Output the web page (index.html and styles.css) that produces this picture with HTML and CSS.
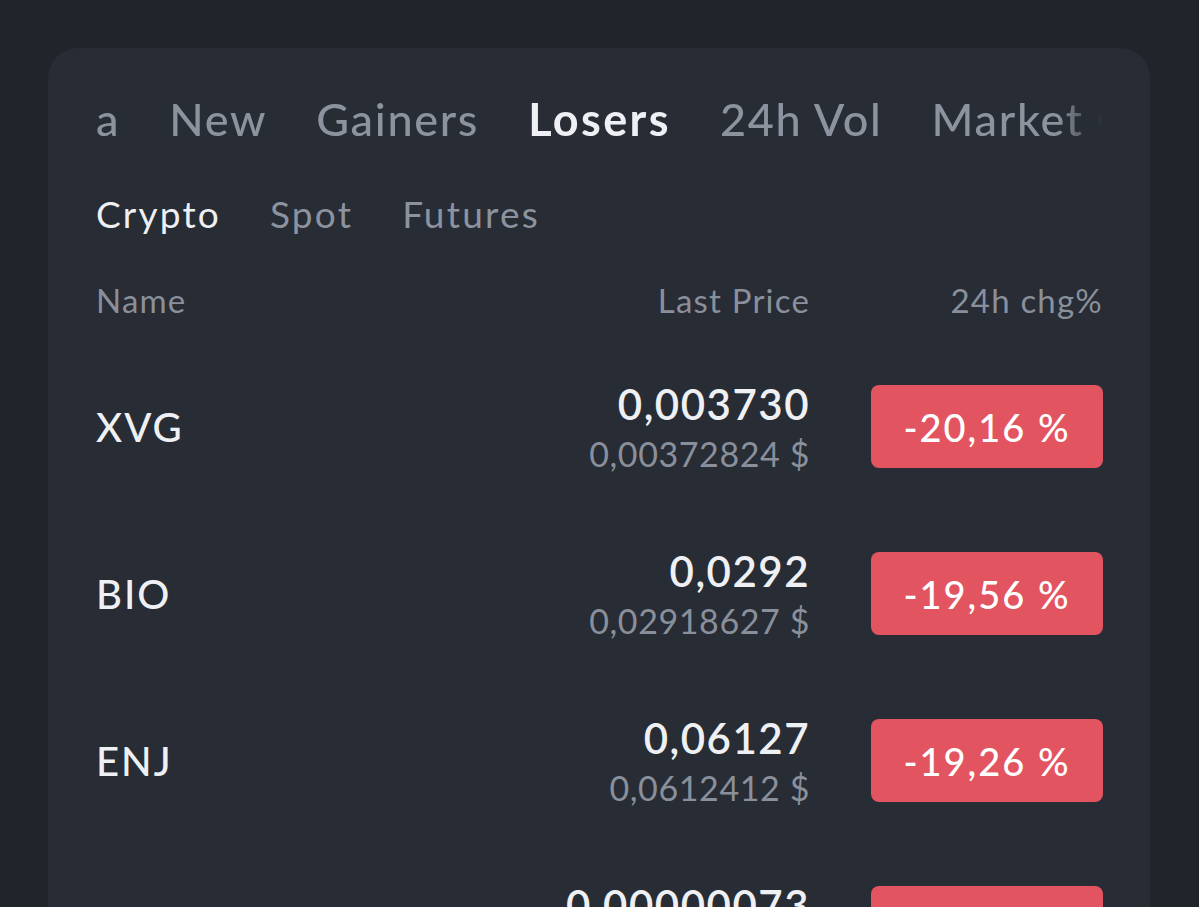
FILE: index.html
```html
<!DOCTYPE html>
<html lang="en">
<head>
  <meta charset="UTF-8">
  <title>Markets</title>
  <link rel="stylesheet" href="styles.css">
</head>
<body>

  <div class="card">
    <div class="tabs">
      <span class="tab">a</span>
      <span class="tab">New</span>
      <span class="tab">Gainers</span>
      <span class="tab active">Losers</span>
      <span class="tab">24h Vol</span>
      <span class="tab">Market Cap</span>
    </div>

    <div class="subtabs">
      <span class="subtab active">Crypto</span>
      <span class="subtab">Spot</span>
      <span class="subtab">Futures</span>
    </div>

    <div class="row head">
      <span>Name</span>
      <span class="right">Last Price</span>
      <span class="right">24h chg%</span>
    </div>

    <div class="row">
      <span class="coin">XVG</span>
      <div class="price">
        <div class="last">0,003730</div>
        <div class="usd">0,00372824 $</div>
      </div>
      <span class="chg">-20,16 %</span>
    </div>

    <div class="row">
      <span class="coin">BIO</span>
      <div class="price">
        <div class="last">0,0292</div>
        <div class="usd">0,02918627 $</div>
      </div>
      <span class="chg">-19,56 %</span>
    </div>

    <div class="row">
      <span class="coin">ENJ</span>
      <div class="price">
        <div class="last">0,06127</div>
        <div class="usd">0,0612412 $</div>
      </div>
      <span class="chg">-19,26 %</span>
    </div>

    <div class="row">
      <span class="coin">PEPE</span>
      <div class="price">
        <div class="last">0,00000073</div>
        <div class="usd">0,00000072 $</div>
      </div>
      <span class="chg">-18,94 %</span>
    </div>
  </div>

</body>
</html>
```

FILE: styles.css
```css
html, body {
  height: 100%;
  overflow: hidden;
}

body {
  font-family: Lato, 'Noto Sans', sans-serif;
  background: #20242b;
  color: #eef0f3;
  margin: 0;
  padding: 48px 49px 0 48px;
}

.card {
  background: #272c35;
  border-radius: 30px;
  padding: 0 47px 0 48px;
  min-height: 1100px;
}

.tabs {
  display: flex;
  gap: 49px;
  padding-top: 39px;
  height: 64px;
  overflow: hidden;
  white-space: nowrap;
  font-size: 45px;
  line-height: 64px;
  letter-spacing: 1.7px;
  color: #8d939e;
  font-weight: 500;
  -webkit-mask-image: linear-gradient(to right, #000 calc(100% - 45px), rgba(0,0,0,0.35) calc(100% - 15px), transparent 100%);
  mask-image: linear-gradient(to right, #000 calc(100% - 45px), rgba(0,0,0,0.35) calc(100% - 15px), transparent 100%);
}

.tab.active {
  color: #eef0f3;
  font-weight: 700;
  letter-spacing: 2.4px;
}

.subtabs {
  display: flex;
  gap: 49px;
  margin-top: 38px;
  font-size: 37px;
  line-height: 50px;
  letter-spacing: 2.2px;
  color: #8d939e;
}

.subtab.active {
  color: #eef0f3;
}

.row {
  display: grid;
  grid-template-columns: 1fr auto 232px;
  column-gap: 61px;
  align-items: center;
  height: 167px;
}

.row.head {
  font-size: 33px;
  letter-spacing: 1.2px;
  color: #8a909b;
  align-items: start;
  padding-top: 41px;
  box-sizing: border-box;
  height: 104px;
}

.right {
  text-align: right;
}

.coin {
  font-size: 40px;
  letter-spacing: 2px;
  font-weight: 500;
}

.price {
  text-align: right;
}

.last {
  font-size: 42px;
  letter-spacing: 1.5px;
  font-weight: 600;
  line-height: 54px;
}

.usd {
  font-size: 34px;
  letter-spacing: 0.6px;
  color: #8a909b;
  line-height: 46px;
}

.chg {
  display: flex;
  justify-content: center;
  align-items: center;
  height: 83px;
  background: #e35461;
  border-radius: 8px;
  font-size: 38px;
  letter-spacing: 2px;
  font-weight: 500;
  color: #fff;
}
```
